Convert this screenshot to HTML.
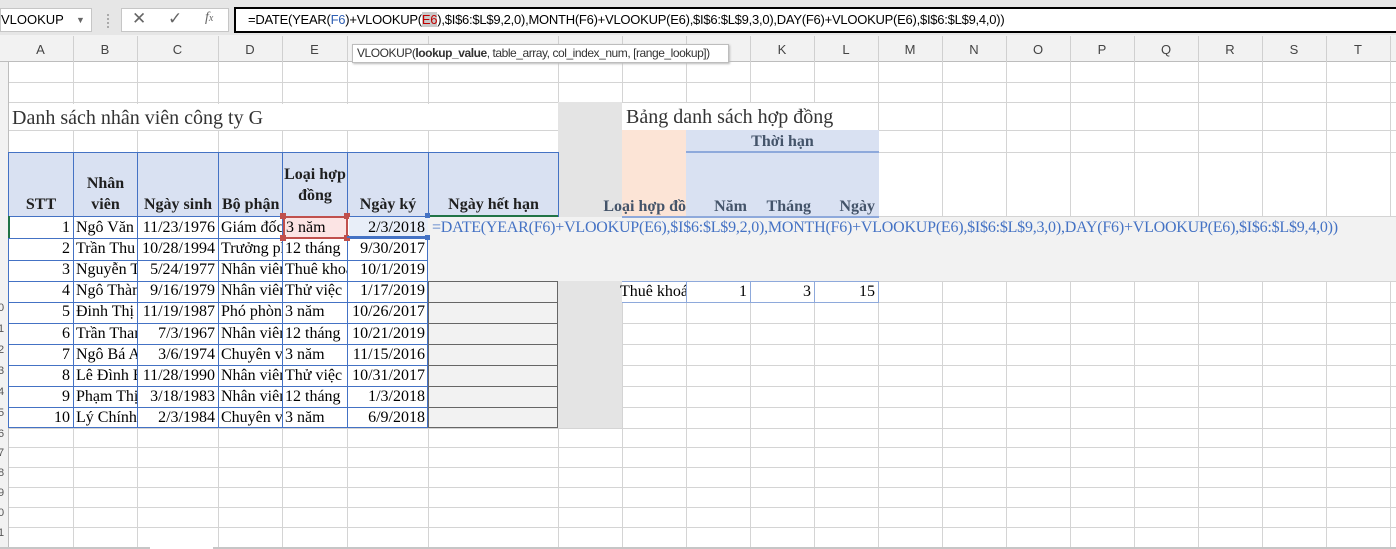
<!DOCTYPE html>
<html><head><meta charset="utf-8"><style>
*{margin:0;padding:0;box-sizing:border-box}
body{width:1396px;height:549px;overflow:hidden;background:#fff;position:relative;font-family:"Liberation Serif",serif;}
.a{position:absolute}
.c{position:absolute;overflow:hidden;white-space:nowrap;font-size:16px;line-height:21px;color:#000;padding:0 2px}
.r{text-align:right;padding-right:3px}
.vl{position:absolute;width:1px;background:#d4d4d4}
.hl{position:absolute;height:1px;background:#d4d4d4}
.ch{position:absolute;top:42px;font:13px "Liberation Sans",sans-serif;color:#444;text-align:center}
.hd{position:absolute;font-weight:bold;font-size:16px;color:#1f1f1f;text-align:center;line-height:21px;overflow:hidden}
.fb{font:13px "Liberation Sans",sans-serif}
</style></head><body>
<div class="a" style="left:0;top:0;width:1396px;height:62px;background:#e6e6e6"></div>
<div class="a fb" style="left:0;top:8px;width:92px;height:24px;background:#fff;border:1px solid #c6c6c6;line-height:22px;padding-left:0">VLOOKUP<span style="position:absolute;left:75px;font-size:9px;color:#666">▼</span></div>
<div class="a" style="left:107px;top:14px;width:2px;height:14px;border-left:2px dotted #aaa"></div>
<div class="a" style="left:121px;top:8px;width:108px;height:24px;background:#fff;border:1px solid #c6c6c6"></div>
<div class="a" style="left:132px;top:9px;font:17px 'Liberation Sans',sans-serif;color:#666">✕</div>
<div class="a" style="left:168px;top:9px;font:17px 'Liberation Sans',sans-serif;color:#666">✓</div>
<div class="a" style="left:205px;top:10px;font:italic 14px 'Liberation Serif',serif;color:#666">f<span style="font-size:10px">x</span></div>
<div class="a fb" style="left:234px;top:7px;width:1162px;height:26px;background:#fff;border:2px solid #000;border-right:none;line-height:22px;padding-left:12px;white-space:nowrap;letter-spacing:-0.25px">=DATE(YEAR(<span style="color:#2f5fb3">F6</span>)+VLOOKUP(<span style="color:#c00000;background:#c9c9c9">E6</span>),$I$6:$L$9,2,0),MONTH(F6)+VLOOKUP(E6),$I$6:$L$9,3,0),DAY(F6)+VLOOKUP(E6),$I$6:$L$9,4,0))</div>
<div class="a" style="left:0;top:35px;width:1396px;height:27px;background:#f2f2f2;border-bottom:1px solid #bdbdbd"></div>
<div class="a" style="left:0;top:62px;width:9px;height:487px;background:#f2f2f2;border-right:1px solid #bdbdbd"></div>
<div id="grid"></div>
<div class="a" style="left:352px;top:44px;width:377px;height:19px;background:#fff;border:1px solid #bdbdbd;box-shadow:1px 1px 2px #bbb;font:12px 'Liberation Sans',sans-serif;line-height:17px;padding-left:4px;color:#333;white-space:nowrap;overflow:hidden;letter-spacing:-0.45px">VLOOKUP(<b>lookup_value</b>, table_array, col_index_num, [range_lookup])</div>
<script>
var X=[8,73,137,218,282,347,428,558,622,686,750,814,878,942,1006,1070,1134,1198,1262,1326,1390];
var Y=[62,82,102,130,152,216,238,260,281,302,323,344,365,386,407,428,447,467,487,507,527,547];
var L="ABCDEFGHIJKLMNOPQRST",h="";
for(var i=0;i<20;i++){h+='<div class="ch" style="left:'+X[i]+'px;width:'+(X[i+1]-X[i])+'px">'+L[i]+'</div><div class="a" style="left:'+X[i+1]+'px;top:36px;width:1px;height:26px;background:#d0d0d0"></div>';}
for(var i=1;i<X.length;i++)h+='<div class="vl" style="left:'+X[i]+'px;top:62px;height:485px"></div>';
for(var j=1;j<Y.length;j++)h+='<div class="hl" style="left:9px;top:'+Y[j]+'px;width:1387px"></div>';
var rn=["","","","","","","","","","0","1","2","3","4","5","6","7","8","9","0","1"];
for(var j=0;j<21;j++)if(rn[j])h+='<div class="a" style="left:0;top:'+Y[j]+'px;height:'+(Y[j+1]-Y[j])+'px;line-height:'+(Y[j+1]-Y[j])+'px;font:11px Liberation Sans,sans-serif;color:#555;width:8px;overflow:hidden;text-indent:-2px">'+rn[j]+'</div>';
document.getElementById('grid').innerHTML=h;
</script>
<div class="a" style="left:558px;top:102px;width:64px;height:326px;background:#e4e4e4"></div>
<div class="a" style="left:428px;top:217px;width:968px;height:64px;background:#f2f2f2"></div>
<div class="a" style="left:428px;top:281px;width:130px;height:147px;background:#f2f2f2;border:1px solid #666;border-top:none"></div>
<div class="a" style="left:428px;top:302px;width:130px;height:1px;background:#666"></div>
<div class="a" style="left:428px;top:323px;width:130px;height:1px;background:#666"></div>
<div class="a" style="left:428px;top:344px;width:130px;height:1px;background:#666"></div>
<div class="a" style="left:428px;top:365px;width:130px;height:1px;background:#666"></div>
<div class="a" style="left:428px;top:386px;width:130px;height:1px;background:#666"></div>
<div class="a" style="left:428px;top:407px;width:130px;height:1px;background:#666"></div>
<div class="a" style="left:428px;top:281px;width:130px;height:1px;background:#666"></div>
<div class="a" style="left:10px;top:104px;width:548px;height:26px;background:#fff"></div>
<div class="c" style="left:10px;top:106px;font-size:20px;line-height:24px;color:#333">Danh sách nhân viên công ty G</div>
<div class="a" style="left:622px;top:103px;width:256px;height:27px;background:#fff"></div>
<div class="c" style="left:624px;top:105px;font-size:20px;line-height:24px;color:#333">Bảng danh sách hợp đồng</div>
<div class="a" style="left:8px;top:152px;width:551px;height:65px;background:#d9e1f2;border:1px solid #4472c4"></div>
<div class="a" style="left:8px;top:216px;width:420px;height:212px;border:1px solid #4472c4;border-top:none"></div>
<script>
var xs=[73,137,218,282,347,428];var s="";
xs.forEach(function(x){s+='<div class="a" style="left:'+x+'px;top:152px;width:1px;height:'+(x==428?65:276)+'px;background:#4472c4"></div>';});
[238,260,281,302,323,344,365,386,407].forEach(function(y){s+='<div class="a" style="left:8px;top:'+y+'px;width:420px;height:1px;background:#4472c4"></div>';});
var d=[["1","Ngô Văn Hùng","11/23/1976","Giám đốc","3 năm","2/3/2018"],["2","Trần Thu Hà","10/28/1994","Trưởng phòng","12 tháng","9/30/2017"],["3","Nguyễn Thị","5/24/1977","Nhân viên","Thuê khoán","10/1/2019"],["4","Ngô Thành","9/16/1979","Nhân viên","Thử việc","1/17/2019"],["5","Đinh Thị Hoa","11/19/1987","Phó phòng","3 năm","10/26/2017"],["6","Trần Thanh","7/3/1967","Nhân viên","12 tháng","10/21/2019"],["7","Ngô Bá An","3/6/1974","Chuyên viên","3 năm","11/15/2016"],["8","Lê Đình Bảo","11/28/1990","Nhân viên","Thử việc","10/31/2017"],["9","Phạm Thị","3/18/1983","Nhân viên","12 tháng","1/3/2018"],["10","Lý Chính Công","2/3/1984","Chuyên viên","3 năm","6/9/2018"]];
var X=[8,73,137,218,282,347,428],R=[1,0,1,0,0,1];
d.forEach(function(r,i){var y=217+i*21.1;r.forEach(function(t,k){s+='<div class="c'+(R[k]?' r':'')+'" style="left:'+(X[k]+1)+'px;top:'+y+'px;width:'+(X[k+1]-X[k]-1)+'px;height:21px">'+t+'</div>';});});
document.write(s);
</script>
<div class="hd" style="left:9px;top:194px;width:64px">STT</div>
<div class="hd" style="left:74px;top:173px;width:63px">Nhân<br>viên</div>
<div class="hd" style="left:138px;top:194px;width:80px">Ngày sinh</div>
<div class="hd" style="left:219px;top:194px;width:63px;text-align:left;padding-left:3px;white-space:nowrap">Bộ phận</div>
<div class="hd" style="left:283px;top:164px;width:64px">Loại hợp<br>đồng</div>
<div class="hd" style="left:348px;top:194px;width:80px">Ngày ký</div>
<div class="hd" style="left:429px;top:194px;width:129px">Ngày hết hạn</div>
<div class="a" style="left:428px;top:215px;width:130px;height:2px;background:#217346"></div>
<div class="a" style="left:8px;top:216px;width:2px;height:22px;background:#217346"></div>
<div class="a" style="left:283px;top:216px;width:65px;height:23px;background:#fce4e4;border:2px solid #c0504d"></div>
<div class="c" style="left:284px;top:217px">3 năm</div>
<div class="a" style="left:280px;top:213px;width:6px;height:6px;background:#c0504d"></div><div class="a" style="left:344px;top:213px;width:6px;height:6px;background:#c0504d"></div>
<div class="a" style="left:280px;top:235px;width:6px;height:6px;background:#c0504d"></div><div class="a" style="left:344px;top:235px;width:6px;height:6px;background:#c0504d"></div>
<div class="a" style="left:349px;top:217px;width:79px;height:21px;background:#e8eef8"></div>
<div class="c r" style="left:349px;top:217px;width:79px">2/3/2018</div>
<div class="a" style="left:347px;top:236px;width:81px;height:2px;background:#4472c4"></div>
<div class="a" style="left:425px;top:213px;width:5px;height:5px;background:#4472c4"></div><div class="a" style="left:425px;top:235px;width:5px;height:5px;background:#4472c4"></div>
<div class="c" style="left:430px;top:217px;color:#4472c4;overflow:visible;letter-spacing:-0.22px">=DATE(YEAR(F6)+VLOOKUP(E6),$I$6:$L$9,2,0),MONTH(F6)+VLOOKUP(E6),$I$6:$L$9,3,0),DAY(F6)+VLOOKUP(E6),$I$6:$L$9,4,0))</div>
<div class="a" style="left:622px;top:130px;width:64px;height:87px;background:#fce4d6"></div>
<div class="a" style="left:686px;top:130px;width:193px;height:87px;background:#d9e1f2"></div>
<div class="a" style="left:686px;top:151px;width:193px;height:2px;background:#8ea9db"></div>
<div class="a" style="left:622px;top:216px;width:257px;height:2px;background:#8ea9db"></div>
<div class="hd" style="left:686px;top:131px;width:193px;color:#44546a">Thời hạn</div>
<div class="hd" style="left:560px;top:196px;width:126px;text-align:right;color:#44546a;white-space:nowrap">Loại hợp đồ</div>
<div class="hd" style="left:686px;top:196px;width:64px;color:#44546a;text-align:right;padding-right:3px">Năm</div>
<div class="hd" style="left:750px;top:196px;width:64px;color:#44546a;text-align:right;padding-right:3px">Tháng</div>
<div class="hd" style="left:814px;top:196px;width:64px;color:#44546a;text-align:right;padding-right:3px">Ngày</div>
<div class="a" style="left:622px;top:281px;width:257px;height:22px;background:#fff;border-top:1px solid #8ea9db;border-bottom:1px solid #8ea9db"></div>
<div class="a" style="left:686px;top:281px;width:1px;height:22px;background:#8ea9db"></div>
<div class="a" style="left:750px;top:281px;width:1px;height:22px;background:#8ea9db"></div>
<div class="a" style="left:814px;top:281px;width:1px;height:22px;background:#8ea9db"></div>
<div class="a" style="left:878px;top:281px;width:1px;height:22px;background:#8ea9db"></div>
<div class="c" style="left:618px;top:281px;width:68px">Thuê khoán</div>
<div class="c r" style="left:686px;top:281px;width:64px">1</div>
<div class="c r" style="left:750px;top:281px;width:64px">3</div>
<div class="c r" style="left:814px;top:281px;width:64px">15</div>
<div class="a" style="left:0;top:547px;width:1396px;height:2px;background:#c6c6c6"></div>
<div class="a" style="left:150px;top:546px;width:63px;height:3px;background:#fff"></div>
</body></html>
